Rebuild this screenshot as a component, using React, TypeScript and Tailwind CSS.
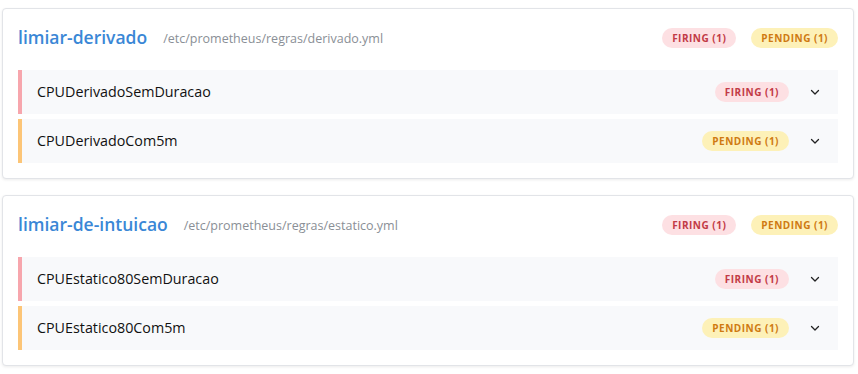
import React from "react";

type Rule = { name: string; state: "firing" | "pending" };
type Group = { name: string; file: string; rules: Rule[] };

const groups: Group[] = [
  {
    name: "limiar-derivado",
    file: "/etc/prometheus/regras/derivado.yml",
    rules: [
      { name: "CPUDerivadoSemDuracao", state: "firing" },
      { name: "CPUDerivadoCom5m", state: "pending" },
    ],
  },
  {
    name: "limiar-de-intuicao",
    file: "/etc/prometheus/regras/estatico.yml",
    rules: [
      { name: "CPUEstatico80SemDuracao", state: "firing" },
      { name: "CPUEstatico80Com5m", state: "pending" },
    ],
  },
];

function Badge({ state }: { state: "firing" | "pending" }) {
  const cls =
    state === "firing"
      ? "bg-[#fde0e3] text-[#c23a46]"
      : "bg-[#fdf1b8] text-[#cf7a12]";
  return (
    <span
      className={`inline-flex items-center h-[20px] px-[10px] rounded-full text-[10px] font-bold tracking-[0.5px] leading-none ${cls}`}
    >
      {state === "firing" ? "FIRING (1)" : "PENDING (1)"}
    </span>
  );
}

function Chevron() {
  return (
    <svg width="16" height="16" viewBox="0 0 16 16" fill="none">
      <path d="M4.5 6.5 L8 10 L11.5 6.5" stroke="#222" strokeWidth="1.3" strokeLinecap="round" strokeLinejoin="round" />
    </svg>
  );
}

export default function App() {
  return (
    <div
      className="w-[858px] h-[374px] bg-white pt-[8px] pl-[2px]"
      style={{ fontFamily: '"Open Sans", "Noto Sans", sans-serif' }}
    >
      <div className="flex flex-col gap-[16px]">
        {groups.map((g) => (
          <div
            key={g.name}
            className="w-[852px] rounded-[4px] border border-[#e2e4e8] bg-white shadow-[0_1px_3px_rgba(0,0,0,0.08)] px-[15px] pt-[15px] pb-[15px]"
          >
            <div className="flex items-center h-[28px] mb-[18px]">
              <span className="text-[17.5px] font-semibold text-[#3a87d6] leading-none">{g.name}</span>
              <span className="ml-[16px] text-[12.5px] text-[#8a8f96] mt-[3px]">{g.file}</span>
              <div className="ml-auto flex items-center gap-[15px]">
                <Badge state="firing" />
                <Badge state="pending" />
              </div>
            </div>
            <div className="flex flex-col gap-[5px]">
              {g.rules.map((r) => (
                <div
                  key={r.name}
                  className={`flex items-center h-[44px] bg-[#f8f9fb] border-l-4 pl-[15px] pr-[15px] ${
                    r.state === "firing" ? "border-[#f7a6ad]" : "border-[#fcc577]"
                  }`}
                >
                  <span className="text-[14.3px] text-[#111]">{r.name}</span>
                  <div className="ml-auto flex items-center gap-[18px]">
                    <Badge state={r.state} />
                    <Chevron />
                  </div>
                </div>
              ))}
            </div>
          </div>
        ))}
      </div>
    </div>
  );
}
